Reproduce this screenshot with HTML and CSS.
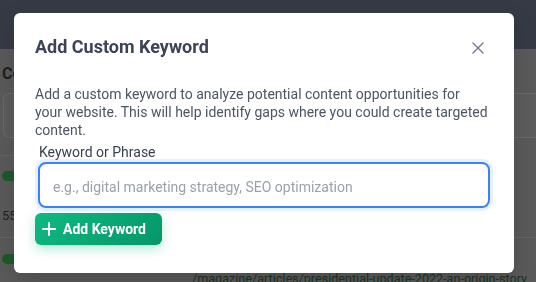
FILE: index.html
```html
<!DOCTYPE html>
<html lang="en">
<head>
<meta charset="utf-8">
<title>Add Custom Keyword</title>
<link rel="stylesheet" href="styles.css">
</head>
<body>
<div class="page">
  <header class="topbar"></header>
  <main class="main">
    <h2 class="section-title">Content Opportunities</h2>
    <div class="card"></div>
    <div class="divider"></div>
    <div class="row">
      <span class="pill"></span>
      <div class="num">55</div>
    </div>
    <div class="row">
      <span class="pill"></span>
      <div class="path">/magazine/articles/presidential-update-2022-an-origin-story</div>
    </div>
  </main>
</div>

<div class="overlay">
  <div class="modal" role="dialog" aria-labelledby="modal-title">
    <div class="modal-header">
      <h3 class="modal-title" id="modal-title">Add Custom Keyword</h3>
      <button class="close-btn" aria-label="Close">
        <svg width="12" height="12" viewBox="0 0 12 12" fill="none" stroke="currentColor" stroke-width="1.4" stroke-linecap="round"><path d="M1 1 L11 11 M11 1 L1 11"/></svg>
      </button>
    </div>
    <p class="modal-desc">Add a custom keyword to analyze potential content opportunities for your website. This will help identify gaps where you could create targeted content.</p>
    <div class="field">
      <label class="field-label" for="kw">Keyword or Phrase</label>
      <input class="field-input" id="kw" type="text" placeholder="e.g., digital marketing strategy, SEO optimization">
    </div>
    <button class="add-btn">
      <svg width="14" height="14" viewBox="0 0 14 14" fill="none" stroke="currentColor" stroke-width="2" stroke-linecap="round"><path d="M7 1 V13 M1 7 H13"/></svg>
      <span>Add Keyword</span>
    </button>
  </div>
</div>
</body>
</html>
```
FILE: styles.css
```css
* { box-sizing: border-box; }
html, body { margin: 0; padding: 0; }
body {
  font-family: Roboto, "Liberation Sans", sans-serif;
  background: #5a5a5a;
  width: 536px;
  height: 282px;
  overflow: hidden;
}

/* dimmed page behind the modal */
.page { width: 536px; }
.topbar { height: 49px; background: #363a44; }
.main { padding: 0 0 0 2px; }
.section-title {
  margin: 15px 0 0;
  font-size: 16px;
  line-height: 20px;
  font-weight: 700;
  color: #1e1f21;
  white-space: nowrap;
}
.card {
  margin: 9px 0 0 1px;
  height: 45px;
  border: 1px solid #696969;
  border-right: none;
  border-radius: 6px 0 0 6px;
  background: #5c5c5c;
}
.divider {
  margin-top: 17px;
  width: 300px;
  height: 1px;
  background: #656565;
}
.row {
  display: flex;
  flex-direction: column;
  padding-top: 15px;
}
.row + .row { border-top: 1px solid #656565; margin-left: -2px; padding-left: 2px; padding-top: 16px; }
.pill {
  width: 60px;
  height: 10px;
  border-radius: 5px;
  background: #1e5a29;
}
.num {
  margin-top: 27px;
  height: 29px;
  font-size: 13px;
  line-height: 16px;
  color: #222;
}
.path {
  margin: 6px 0 0 190px;
  font-size: 12.6px;
  line-height: 18px;
  color: #1b3522;
  white-space: nowrap;
}

/* modal */
.overlay {
  position: fixed;
  inset: 0;
  padding: 13px 22px 0 14px;
}
.modal {
  width: 500px;
  height: 260px;
  background: #fff;
  border-radius: 6px;
  padding: 21px 21px 0 21px;
  box-shadow: 0 10px 25px rgba(0,0,0,0.15);
}
.modal-header {
  display: flex;
  align-items: center;
  justify-content: space-between;
}
.modal-title {
  margin: 0;
  font-size: 18px;
  line-height: 25px;
  font-weight: 700;
  color: #3a4557;
}
.close-btn {
  border: none;
  background: none;
  padding: 0;
  margin: 2px 9px 0 0;
  width: 12px;
  height: 12px;
  color: #6b7a90;
  display: flex;
}
.modal-desc {
  margin: 26px 0 0;
  max-width: 455px;
  font-size: 14px;
  line-height: 18px;
  color: #4b5563;
}
.field {
  margin: 4px 3px 0;
  display: flex;
  flex-direction: column;
}
.field-label {
  padding-left: 1px;
  font-size: 14px;
  line-height: 18px;
  color: #374151;
}
.field-input {
  margin-top: 1px;
  height: 46px;
  border: 2px solid #3b82f6;
  border-radius: 8px;
  padding: 3px 13px 0;
  font-family: inherit;
  font-size: 14px;
  color: #1f2937;
  outline: none;
  box-shadow: 0 0 0 3px rgba(59,130,246,0.12);
}
.field-input::placeholder { color: #9aa1ad; }
.add-btn {
  margin-top: 5px;
  height: 32px;
  width: 127px;
  display: flex;
  align-items: center;
  gap: 7px;
  padding: 0 0 0 7px;
  border: none;
  border-radius: 6px;
  background: linear-gradient(135deg, #10b981, #059669);
  color: #fff;
  font-family: inherit;
  font-size: 14px;
  font-weight: 700;
  box-shadow: 0 4px 12px rgba(16,185,129,0.3);
}
.add-btn svg { flex: none; }
```
